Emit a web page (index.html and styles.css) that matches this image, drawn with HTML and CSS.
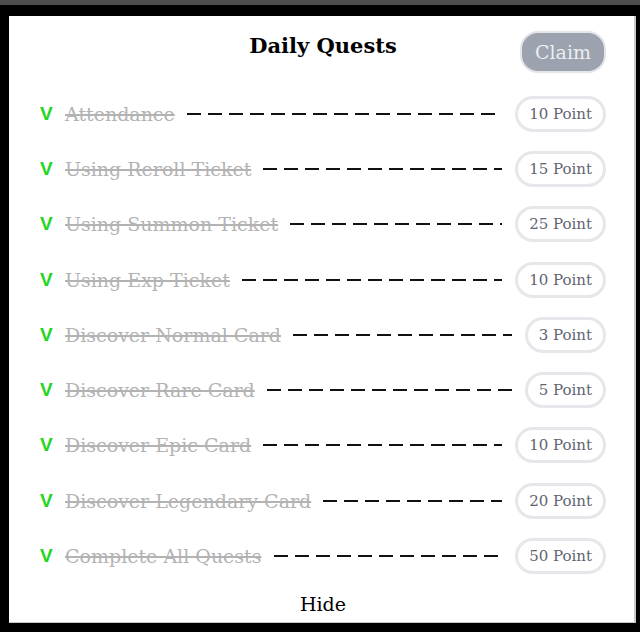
FILE: index.html
```html
<!DOCTYPE html>
<html>
<head>
<meta charset="utf-8">
<link rel="stylesheet" href="styles.css">
</head>
<body>
<div class="topstrip"></div>
<div class="frame">
  <div class="panel">
    <div class="header">
      <h1 class="title">Daily Quests</h1>
      <button class="claim">Claim</button>
    </div>
    <ul class="quests">
      <li class="quest"><span class="check">V</span><span class="name">Attendance</span><span class="dash"></span><span class="points">10 Point</span></li>
      <li class="quest"><span class="check">V</span><span class="name">Using Reroll Ticket</span><span class="dash"></span><span class="points">15 Point</span></li>
      <li class="quest"><span class="check">V</span><span class="name">Using Summon Ticket</span><span class="dash"></span><span class="points">25 Point</span></li>
      <li class="quest"><span class="check">V</span><span class="name">Using Exp Ticket</span><span class="dash"></span><span class="points">10 Point</span></li>
      <li class="quest"><span class="check">V</span><span class="name">Discover Normal Card</span><span class="dash"></span><span class="points">3 Point</span></li>
      <li class="quest"><span class="check">V</span><span class="name">Discover Rare Card</span><span class="dash"></span><span class="points">5 Point</span></li>
      <li class="quest"><span class="check">V</span><span class="name">Discover Epic Card</span><span class="dash"></span><span class="points">10 Point</span></li>
      <li class="quest"><span class="check">V</span><span class="name">Discover Legendary Card</span><span class="dash"></span><span class="points">20 Point</span></li>
      <li class="quest"><span class="check">V</span><span class="name">Complete All Quests</span><span class="dash"></span><span class="points">50 Point</span></li>
    </ul>
    <div class="footer"><button class="hide">Hide</button></div>
  </div>
</div>
</body>
</html>
```

FILE: styles.css
```css
* { box-sizing: border-box; }
html, body {
  margin: 0;
  padding: 0;
  background: #000;
  width: 640px;
  height: 632px;
  overflow: hidden;
}
.topstrip {
  height: 5px;
  background: #4d4d4d;
}
.frame {
  padding: 11px 4px 0 9px;
}
.panel {
  width: 627px;
  height: 607px;
  background: #fff;
  border-right: 2px solid #c8c8c8;
  border-bottom: 1px solid #c8c8c8;
  padding: 0 28px 0 31px;
  display: flex;
  flex-direction: column;
  font-family: "DejaVu Serif", serif;
}
.header {
  position: relative;
  height: 70px;
  display: flex;
  justify-content: center;
}
.title {
  margin: 16px 0 0;
  font-size: 21px;
  font-weight: bold;
  color: #000;
  line-height: 27px;
}
.claim {
  position: absolute;
  right: 0;
  top: 15px;
  width: 86px;
  height: 42px;
  border-radius: 18px;
  border: 2px solid #e3e5ea;
  background: #9ca2ae;
  color: #eceef2;
  font-family: "DejaVu Serif", serif;
  font-size: 19px;
  padding: 0;
}
.quests {
  list-style: none;
  margin: 0;
  padding: 0;
}
.quest {
  height: 55.3px;
  display: flex;
  align-items: center;
}
.check {
  font-family: "Liberation Sans", sans-serif;
  font-weight: bold;
  color: #22d622;
  font-size: 19px;
  width: 25px;
}
.name {
  color: #b3b3b3;
  font-size: 19px;
  text-decoration: line-through;
  text-decoration-thickness: 2px;
  white-space: nowrap;
}
.dash {
  flex: 1;
  height: 2px;
  margin: 0 13px 0 12px;
  background: repeating-linear-gradient(to right, #111 0 14px, transparent 14px 21px);
}
.points {
  height: 36px;
  border: 3px solid #e6e7eb;
  border-radius: 18px;
  padding: 0 11px;
  display: flex;
  align-items: center;
  color: #5f6470;
  font-size: 15px;
  white-space: nowrap;
}
.footer {
  flex: 1;
  display: flex;
  justify-content: center;
  align-items: center;
}
.hide {
  background: none;
  border: none;
  font-family: "DejaVu Serif", serif;
  font-size: 19px;
  color: #000;
  padding: 0;
  margin-top: 2px;
}
```
